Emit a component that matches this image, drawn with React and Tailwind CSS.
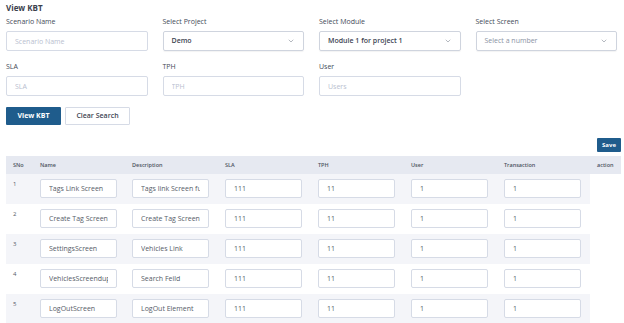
import React from 'react';
import { ChevronDown } from 'lucide-react';

const rows = [
  { sno: 1, name: 'Tags Link Screen', desc: 'Tags link Screen functionality', sla: '111', tph: '11', user: '1', tx: '1' },
  { sno: 2, name: 'Create Tag Screen', desc: 'Create Tag Screen', sla: '111', tph: '11', user: '1', tx: '1' },
  { sno: 3, name: 'SettingsScreen', desc: 'Vehicles Link', sla: '111', tph: '11', user: '1', tx: '1' },
  { sno: 4, name: 'VehiclesScreenduplicate', desc: 'Search Feild', sla: '111', tph: '11', user: '1', tx: '1' },
  { sno: 5, name: 'LogOutScreen', desc: 'LogOut Element', sla: '111', tph: '11', user: '1', tx: '1' },
];

const Field = ({ label, children }) => (
  <div className="flex flex-col">
    <label className="block h-[14px] leading-[14px] text-[7px] text-[#444b57]">{label}</label>
    <div className="mt-[2px]">{children}</div>
  </div>
);

const TextBox = ({ placeholder }) => (
  <input
    placeholder={placeholder}
    className="block w-full h-[20px] border border-[#d6dbe6] rounded-[2px] px-[8px] text-[7px] leading-[18px] text-[#444] placeholder:text-[#b9c0cf] outline-none"
  />
);

const SelectBox = ({ value, muted }) => (
  <div className="w-full h-[20px] border border-[#cfd4de] rounded-[2px] pl-[8px] pr-[8px] flex items-center justify-between shadow-[0_1px_1px_rgba(0,0,0,0.05)]">
    <span className={`text-[7px] leading-[18px] ${muted ? 'text-[#8a92a3]' : 'text-[#3d4452] font-semibold'}`}>{value}</span>
    <ChevronDown size={8} strokeWidth={1.5} className="text-[#6b7280]" />
  </div>
);

const CellInput = ({ value }) => (
  <input
    readOnly
    value={value}
    className="block w-[77px] h-[19px] border border-[#d6dbe6] rounded-[2px] px-[8px] text-[7px] leading-[17px] text-[#555c68] bg-white outline-none"
  />
);

export default function App() {
  return (
    <div className="w-[624px] h-[323px] overflow-hidden bg-white font-['Open_Sans',sans-serif]">
      <div className="px-[6px] pt-[1px]">
        <h1 className="h-[13px] leading-[13px] text-[8px] font-bold text-[#3b414d]">View KBT</h1>

        <div className="grid grid-cols-4 gap-x-[15px] gap-y-[9px] pr-[1px] mt-[1px]">
          <Field label="Scenario Name"><TextBox placeholder="Scenario Name" /></Field>
          <Field label="Select Project"><SelectBox value="Demo" /></Field>
          <Field label="Select Module"><SelectBox value="Module 1 for project 1" /></Field>
          <Field label="Select Screen"><SelectBox value="Select a number" muted /></Field>
          <Field label="SLA"><TextBox placeholder="SLA" /></Field>
          <Field label="TPH"><TextBox placeholder="TPH" /></Field>
          <Field label="User"><TextBox placeholder="Users" /></Field>
        </div>

        <div className="flex gap-[4px] mt-[11px]">
          <button className="w-[55px] h-[18px] bg-[#1f5c8c] text-white text-[7px] leading-[18px] font-bold rounded-[1px]">View KBT</button>
          <button className="w-[65px] h-[18px] bg-white border border-[#d6dbe6] text-[#3d4452] text-[7px] leading-[16px] font-semibold rounded-[1px]">Clear Search</button>
        </div>
      </div>

      <div className="pl-[6px] pr-[3px] mt-[13px]">
        <div className="flex justify-end">
          <button className="w-[24px] h-[14px] bg-[#1f5c8c] text-white text-[6px] leading-[14px] font-bold rounded-[1px]">Save</button>
        </div>
        <table className="mt-[4px] w-[615px] table-fixed border-collapse">
          <colgroup>
            <col className="w-[27px]" />
            <col className="w-[92px]" />
            <col className="w-[93px]" />
            <col className="w-[93px]" />
            <col className="w-[93px]" />
            <col className="w-[93px]" />
            <col className="w-[93px]" />
            <col className="w-[31px]" />
          </colgroup>
          <thead>
            <tr className="bg-[#e6e9f1] h-[18px] text-[5.5px] leading-[8px] text-[#4b5260] text-left">
              <th className="pl-[7px] p-0 font-semibold">SNo</th>
              <th className="pl-[7px] font-semibold">Name</th>
              <th className="pl-[7px] font-semibold">Description</th>
              <th className="pl-[7px] font-semibold">SLA</th>
              <th className="pl-[7px] font-semibold">TPH</th>
              <th className="pl-[7px] font-semibold">User</th>
              <th className="pl-[7px] font-semibold">Transaction</th>
              <th className="pl-[7px] font-semibold">action</th>
            </tr>
          </thead>
          <tbody>
            {rows.map((r, i) => (
              <tr key={r.sno} className={`h-[30px] ${i % 2 === 0 ? 'bg-[#f4f5f9]' : 'bg-white'}`}>
                <td className="pl-[7px] pt-[6px] align-top text-[6px] leading-[8px] text-[#555c68]">{r.sno}</td>
                <td className="pl-[7px] pt-[5px] pb-[6px] align-top"><CellInput value={r.name} /></td>
                <td className="pl-[7px] pt-[5px] pb-[6px] align-top"><CellInput value={r.desc} /></td>
                <td className="pl-[7px] pt-[5px] pb-[6px] align-top"><CellInput value={r.sla} /></td>
                <td className="pl-[7px] pt-[5px] pb-[6px] align-top"><CellInput value={r.tph} /></td>
                <td className="pl-[7px] pt-[5px] pb-[6px] align-top"><CellInput value={r.user} /></td>
                <td className="pl-[7px] pt-[5px] pb-[6px] align-top"><CellInput value={r.tx} /></td>
              </tr>
            ))}
          </tbody>
        </table>
      </div>
    </div>
  );
}
